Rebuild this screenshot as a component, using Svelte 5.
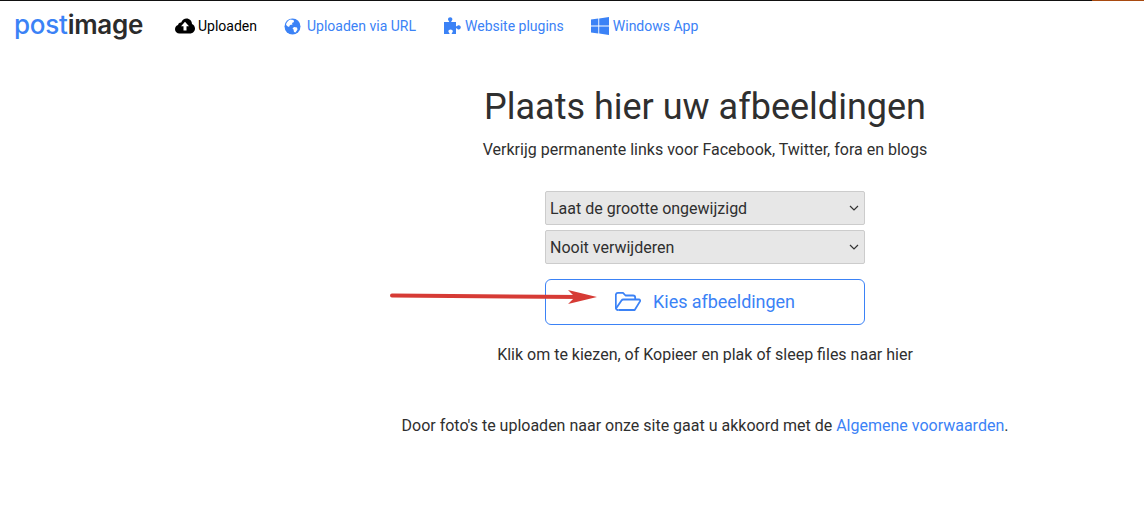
<script lang="ts">
   const navItems = [
      { label: "Uploaden via URL", icon: "globe" },
      { label: "Website plugins", icon: "puzzle" },
      { label: "Windows App", icon: "windows" },
   ];
</script>

<div class="topline"><span class="hot"></span></div>

<header>
   <a class="logo" href="#top"><span class="post">post</span><span class="image">image</span></a>
   <nav>
      <a class="item active" href="#top">
         <svg width="20" height="16" viewBox="0 0 20 16">
            <path fill="#000" d="M4.5 15.5C2 15.5 0 13.6 0 11.2c0-2 1.300-3.600 3.100-4.100C3.200 5.400 4.600 4.300 6.200 4.500 7.200 2 9.300.5 11.500.5c3 0 5.400 2.400 5.500 5.400 1.800.8 3 2.600 3 4.600 0 2.800-2.200 5-5 5z"/>
            <path fill="#fff" d="M10 3.800l4 4.400h-2.500v4.300h-3V8.200H6z"/>
         </svg>
         Uploaden
      </a>
      {#each navItems as item}
         <a class="item {item.icon}" href="#top">
            {#if item.icon === "globe"}
               <svg width="17" height="17" viewBox="0 0 17 17">
                  <circle cx="8.500" cy="8.500" r="8" fill="#3b82f6"/>
                  <path fill="#fff" d="M6 1.500l3.500.5.5 2-2 1 .5 1.500-2.500.5-1 2-2-1-1-1.500C2.500 4.500 4 2.500 6 1.500zM10 9l3 .5.500 2-2 3-1.500-.5-.5-2.500-1-1z"/>
               </svg>
            {:else if item.icon === "puzzle"}
               <svg width="17" height="18" viewBox="0 0 17 18">
                  <path fill="#3b82f6" d="M0 5h4.800c.4 0 .5-.4.2-.8C4.500 3.600 4 3.100 4 2.200 4 1 5 .2 6.200.2s2.200.8 2.200 2c0 .9-.5 1.400-1 2-.3.4-.2.800.2.800H12v4c0 .4.400.5.800.2.600-.5 1.100-1 2-1 1.200 0 2 1 2 2.100s-.8 2.100-2 2.100c-.9 0-1.400-.5-2-1-.4-.3-.8-.2-.8.2v5.400H8c-.4 0-.5-.4-.2-.8.500-.6 1-1.100 1-2 0-1.100-1-1.800-2.200-1.800s-2.200.7-2.200 1.800c0 .9.500 1.400 1 2 .3.400.2.800-.2.800H0z"/>
               </svg>
            {:else}
               <svg width="18" height="18" viewBox="0 0 18 18">
                  <path fill="#3b82f6" d="M0 2.600l7.300-1v7H0zM8.200 1.400L18 0v8.600H8.200zM0 9.500h7.300v7l-7.300-1zM8.200 9.500H18V18l-9.800-1.400z"/>
               </svg>
            {/if}
            {item.label}
         </a>
      {/each}
   </nav>
</header>

<main>
   <h1>Plaats hier uw afbeeldingen</h1>
   <p class="lead">Verkrijg permanente links voor Facebook, Twitter, fora en blogs</p>

   <div class="controls">
      <select>
         <option>Laat de grootte ongewijzigd</option>
      </select>
      <select>
         <option>Nooit verwijderen</option>
      </select>
      <button type="button">
         <svg width="26" height="19" viewBox="0 0 26 19" fill="none" stroke="#3b82f6" stroke-width="1.800" stroke-linejoin="round">
            <path d="M3.500 18H3a2.200 2.200 0 0 1-2.200-2.200V3A2.200 2.200 0 0 1 3 .9h5l2.500 2.600H18A2.200 2.200 0 0 1 20.200 5.700V7.500"/>
            <path d="M3.500 18h16.200l5.300-8.600c.4-.9 0-1.900-1.100-1.900H8.300c-.8 0-1.400.4-1.800 1L1 16.500"/>
         </svg>
         <span class="label">Kies afbeeldingen</span>
      </button>
   </div>

   <p class="hint">Klik om te kiezen, of Kopieer en plak of sleep files naar hier</p>
   <p class="terms">Door foto's te uploaden naar onze site gaat u akkoord met de <a href="#top">Algemene voorwaarden</a>.</p>
</main>

<!-- annotation drawn over the page -->
<svg class="arrow" width="210" height="16" viewBox="0 0 210 16">
   <path d="M2 5.500L190 7" stroke="#d63b35" stroke-width="4" stroke-linecap="round" fill="none"/>
   <path d="M178 0L207 7 178 14 185 7z" fill="#d63b35"/>
</svg>

<style>
   :global(body) {
      margin: 0;
      background: #fff;
      font-family: Roboto, "Liberation Sans", sans-serif;
      font-size: 16px;
      color: #2f2f2f;
   }

   .topline {
      height: 1px;
      background: #111;
      display: flex;
      justify-content: flex-end;
   }
   .hot {
      width: 52px;
      background: #a84a10;
   }

   header {
      display: flex;
      align-items: center;
      height: 50px;
      padding-left: 14px;
   }

   .logo {
      width: 130px;
      font-family: Inter, sans-serif;
      font-size: 26px;
      font-weight: 500;
      letter-spacing: -0.25px;
      line-height: 50px;
      text-decoration: none;
      white-space: nowrap;
      margin-top: -3px;
   }
   .post {
      color: #3b82f6;
   }
   .image {
      color: #2b2b2b;
      font-weight: 600;
   }

   nav {
      display: flex;
      align-items: center;
      gap: 27px;
      margin-left: 31px;
   }

   .item {
      display: flex;
      align-items: center;
      gap: 6px;
      font-size: 14px;
      color: #3b82f6;
      text-decoration: none;
      white-space: nowrap;
   }
   .item.active {
      color: #000;
      gap: 3px;
   }
   .item.globe {
      padding-right: 1px;
   }
   .item.puzzle,
   .item.windows {
      gap: 4px;
   }

   main {
      padding-left: 266px;
      display: flex;
      flex-direction: column;
      align-items: center;
   }

   h1 {
      margin: 31px 0 0;
      font-size: 36px;
      font-weight: 400;
      line-height: 50px;
      color: #2f2f2f;
   }

   .lead {
      margin: 6px 0 0;
      line-height: 24px;
   }

   .controls {
      display: flex;
      flex-direction: column;
      width: 320px;
      margin-top: 29px;
   }

   select {
      appearance: none;
      height: 34px;
      margin-bottom: 5px;
      padding: 0 4px;
      font-family: inherit;
      font-size: 16px;
      color: #2f2f2f;
      background: #e7e7e7 url("data:image/svg+xml,%3Csvg xmlns='http://www.w3.org/2000/svg' width='10' height='6'%3E%3Cpath d='M1 1l4 4 4-4' fill='none' stroke='%23333' stroke-width='1.200'/%3E%3C/svg%3E") no-repeat right 5px center;
      border: 1px solid #ccc;
      border-radius: 2px;
   }

   button {
      display: flex;
      align-items: center;
      justify-content: center;
      gap: 12px;
      height: 46px;
      margin-top: 10px;
      padding-bottom: 2px;
      font-family: inherit;
      font-size: 18px;
      color: #3b82f6;
      background: #fff;
      border: 1px solid #3b82f6;
      border-radius: 6px;
   }
   .label {
      letter-spacing: -0.05px;
   }

   .hint {
      margin: 18px 0 0;
      line-height: 24px;
   }

   .terms {
      margin: 47px 0 0;
      line-height: 24px;
   }
   .terms a {
      color: #3b82f6;
      text-decoration: none;
   }

   .arrow {
      position: absolute;
      left: 390px;
      top: 290px;
   }
</style>
